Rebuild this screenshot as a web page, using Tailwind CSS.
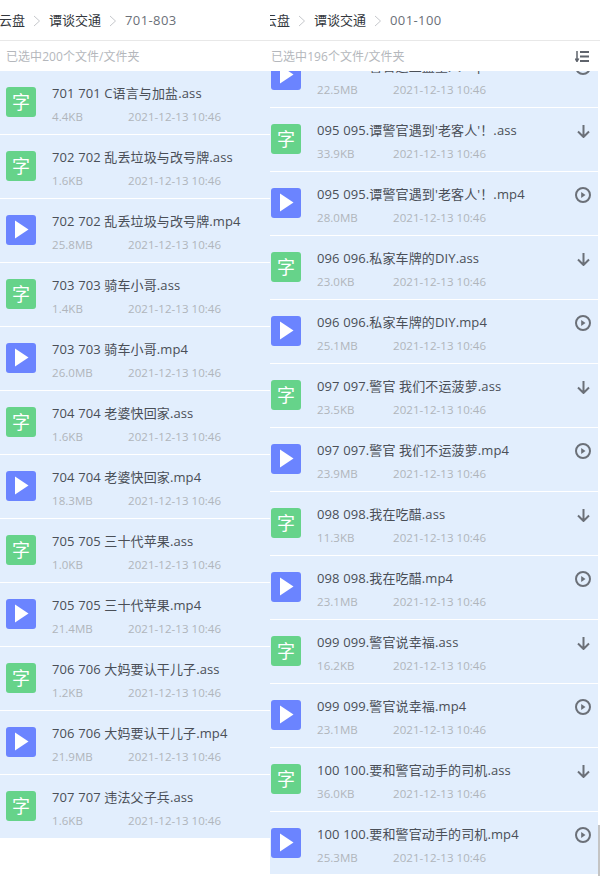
<!DOCTYPE html>
<html lang="en">
<head>
  <meta charset="UTF-8" />
  <title>云盘</title>
  <script src="https://cdn.jsdelivr.net/npm/@tailwindcss/browser@4"></script>
</head>
<body class="bg-white w-[600px] h-[876px] overflow-hidden relative flex font-['Open_Sans','Noto_Sans_CJK_SC',sans-serif]">

  <!-- Left window -->
  <div class="w-[270px] h-[876px] overflow-hidden">
    <div class="h-[41px] pt-[2px] border-b border-[#e8e8e8] flex items-center -ml-px text-[13px] text-[#33373d] whitespace-nowrap">
      <span>云盘</span>
      <svg class="w-[8px] h-[12px] mx-[8px]" viewBox="0 0 8 12" fill="none" stroke="#c6c8cc" stroke-width="1"><path d="M1 1l5.5 5L1 11"/></svg>
      <span>谭谈交通</span>
      <svg class="w-[8px] h-[12px] mx-[8px]" viewBox="0 0 8 12" fill="none" stroke="#c6c8cc" stroke-width="1"><path d="M1 1l5.5 5L1 11"/></svg>
      <span class="text-[#6b7078] tracking-[0.4px]">701-803</span>
    </div>
    <div class="h-[30px] pt-[2px] flex items-center pl-[6px] text-[12px] tracking-[0.05px] text-[#b4b7bc]">已选中200个文件/文件夹</div>
    <div id="leftList" class="bg-[#e2eefd]"></div>
  </div>

  <!-- Right window -->
  <div class="w-[330px] h-[876px] overflow-hidden bg-white">
    <div class="h-[41px] pt-[2px] border-b border-[#e8e8e8] flex items-center -ml-[6px] text-[13px] text-[#33373d] whitespace-nowrap">
      <span>云盘</span>
      <svg class="w-[8px] h-[12px] mx-[8px]" viewBox="0 0 8 12" fill="none" stroke="#c6c8cc" stroke-width="1"><path d="M1 1l5.5 5L1 11"/></svg>
      <span>谭谈交通</span>
      <svg class="w-[8px] h-[12px] mx-[8px]" viewBox="0 0 8 12" fill="none" stroke="#c6c8cc" stroke-width="1"><path d="M1 1l5.5 5L1 11"/></svg>
      <span class="text-[#6b7078] tracking-[0.4px]">001-100</span>
    </div>
    <div class="h-[30px] pt-[2px] flex items-center justify-between pl-px pr-[11px] relative z-10 bg-white text-[12px] tracking-[0.05px] text-[#b4b7bc]">
      <span>已选中196个文件/文件夹</span>
      <svg class="w-[14px] h-[11px] -mt-[2px]" viewBox="0 0 14 11" fill="none" stroke="#5f646c" stroke-width="2"><path d="M2 0v9.500M0.300 7.500L2 10.500L3.700 7.500" stroke-width="1.500"/><path d="M5 1h9M5 5.500h9M5 10h9"/></svg>
    </div>
    <div class="w-[328px] h-[803px] overflow-hidden">
      <div id="rightList" class="bg-[#e2eefd] -mt-[27px]"></div>
    </div>
  </div>

  <!-- Scrollbar -->
  <div class="absolute right-0 top-[825px] w-[2px] h-[51px] bg-[#c4c4c4]"></div>

  <script>
    const dateText = '2021-12-13 10:46';

    const leftFiles = [
      ['701 701 C语言与加盐.ass', '4.4KB'],
      ['702 702 乱丢垃圾与改号牌.ass', '1.6KB'],
      ['702 702 乱丢垃圾与改号牌.mp4', '25.8MB'],
      ['703 703 骑车小哥.ass', '1.4KB'],
      ['703 703 骑车小哥.mp4', '26.0MB'],
      ['704 704 老婆快回家.ass', '1.6KB'],
      ['704 704 老婆快回家.mp4', '18.3MB'],
      ['705 705 三十代苹果.ass', '1.0KB'],
      ['705 705 三十代苹果.mp4', '21.4MB'],
      ['706 706 大妈要认干儿子.ass', '1.2KB'],
      ['706 706 大妈要认干儿子.mp4', '21.9MB'],
      ['707 707 违法父子兵.ass', '1.6KB']
    ];

    const rightFiles = [
      ['094 094.警官遇上蓝星人.mp4', '22.5MB'],
      ["095 095.谭警官遇到'老客人'！.ass", '33.9KB'],
      ["095 095.谭警官遇到'老客人'！.mp4", '28.0MB'],
      ['096 096.私家车牌的DIY.ass', '23.0KB'],
      ['096 096.私家车牌的DIY.mp4', '25.1MB'],
      ['097 097.警官 我们不运菠萝.ass', '23.5KB'],
      ['097 097.警官 我们不运菠萝.mp4', '23.9MB'],
      ['098 098.我在吃醋.ass', '11.3KB'],
      ['098 098.我在吃醋.mp4', '23.1MB'],
      ['099 099.警官说幸福.ass', '16.2KB'],
      ['099 099.警官说幸福.mp4', '23.1MB'],
      ['100 100.要和警官动手的司机.ass', '36.0KB'],
      ['100 100.要和警官动手的司机.mp4', '25.3MB']
    ];

    const subIcon = `<div class="w-[30px] h-[30px] rounded-[3px] bg-[#66d38a] flex items-center justify-center text-white text-[18px] leading-none">字</div>`;
    const videoIcon = `<div class="w-[30px] h-[30px] rounded-[3px] bg-[#6b84ff] flex items-center justify-center"><svg class="w-[30px] h-[30px]" viewBox="0 0 30 30"><path d="M9 5.500L22.500 14.500L9 23.500Z" fill="#fff"/></svg></div>`;

    const downIcon = `<svg class="w-[13px] h-[13px]" viewBox="0 0 13 13" fill="none" stroke="#6b7078" stroke-width="2"><path d="M6.500 0v11.500M1 6.500l5.500 5.500L12 6.500"/></svg>`;
    const playIcon = `<svg class="w-[16px] h-[16px]" viewBox="0 0 16 16" fill="none"><circle cx="8" cy="8" r="7" stroke="#6b7078" stroke-width="2"/><path d="M6.200 5l4.300 3-4.300 3z" fill="#6b7078"/></svg>`;

    function renderRow(file, withAction, iconClass) {
      const isVideo = file[0].endsWith('.mp4');
      const action = withAction
        ? `<div class="absolute right-[6px] top-[15px] w-[18px] h-[16px] flex items-center justify-center">${isVideo ? playIcon : downIcon}</div>`
        : '';
      return `<div class="relative h-[64px] border-b border-white flex whitespace-nowrap">
        <div class="${iconClass}">${isVideo ? videoIcon : subIcon}</div>
        <div class="ml-[16px] pt-[12px]">
          <div class="h-[20px] leading-[20px] text-[13px] tracking-[0.12px] text-[#4a4f57]">${file[0]}</div>
          <div class="h-[20px] mt-[4px] leading-[20px] flex text-[11.500px] tracking-[0.05px] text-[#b0b5bb]">
            <span class="w-[76px]">${file[1]}</span><span>${dateText}</span>
          </div>
        </div>
        ${action}
      </div>`;
    }

    document.getElementById('leftList').innerHTML =
      leftFiles.map(f => renderRow(f, false, 'ml-[6px] mt-[16px]')).join('');
    document.getElementById('rightList').innerHTML =
      rightFiles.map(f => renderRow(f, true, 'ml-px mt-[16px]')).join('');
  </script>
</body>
</html>
